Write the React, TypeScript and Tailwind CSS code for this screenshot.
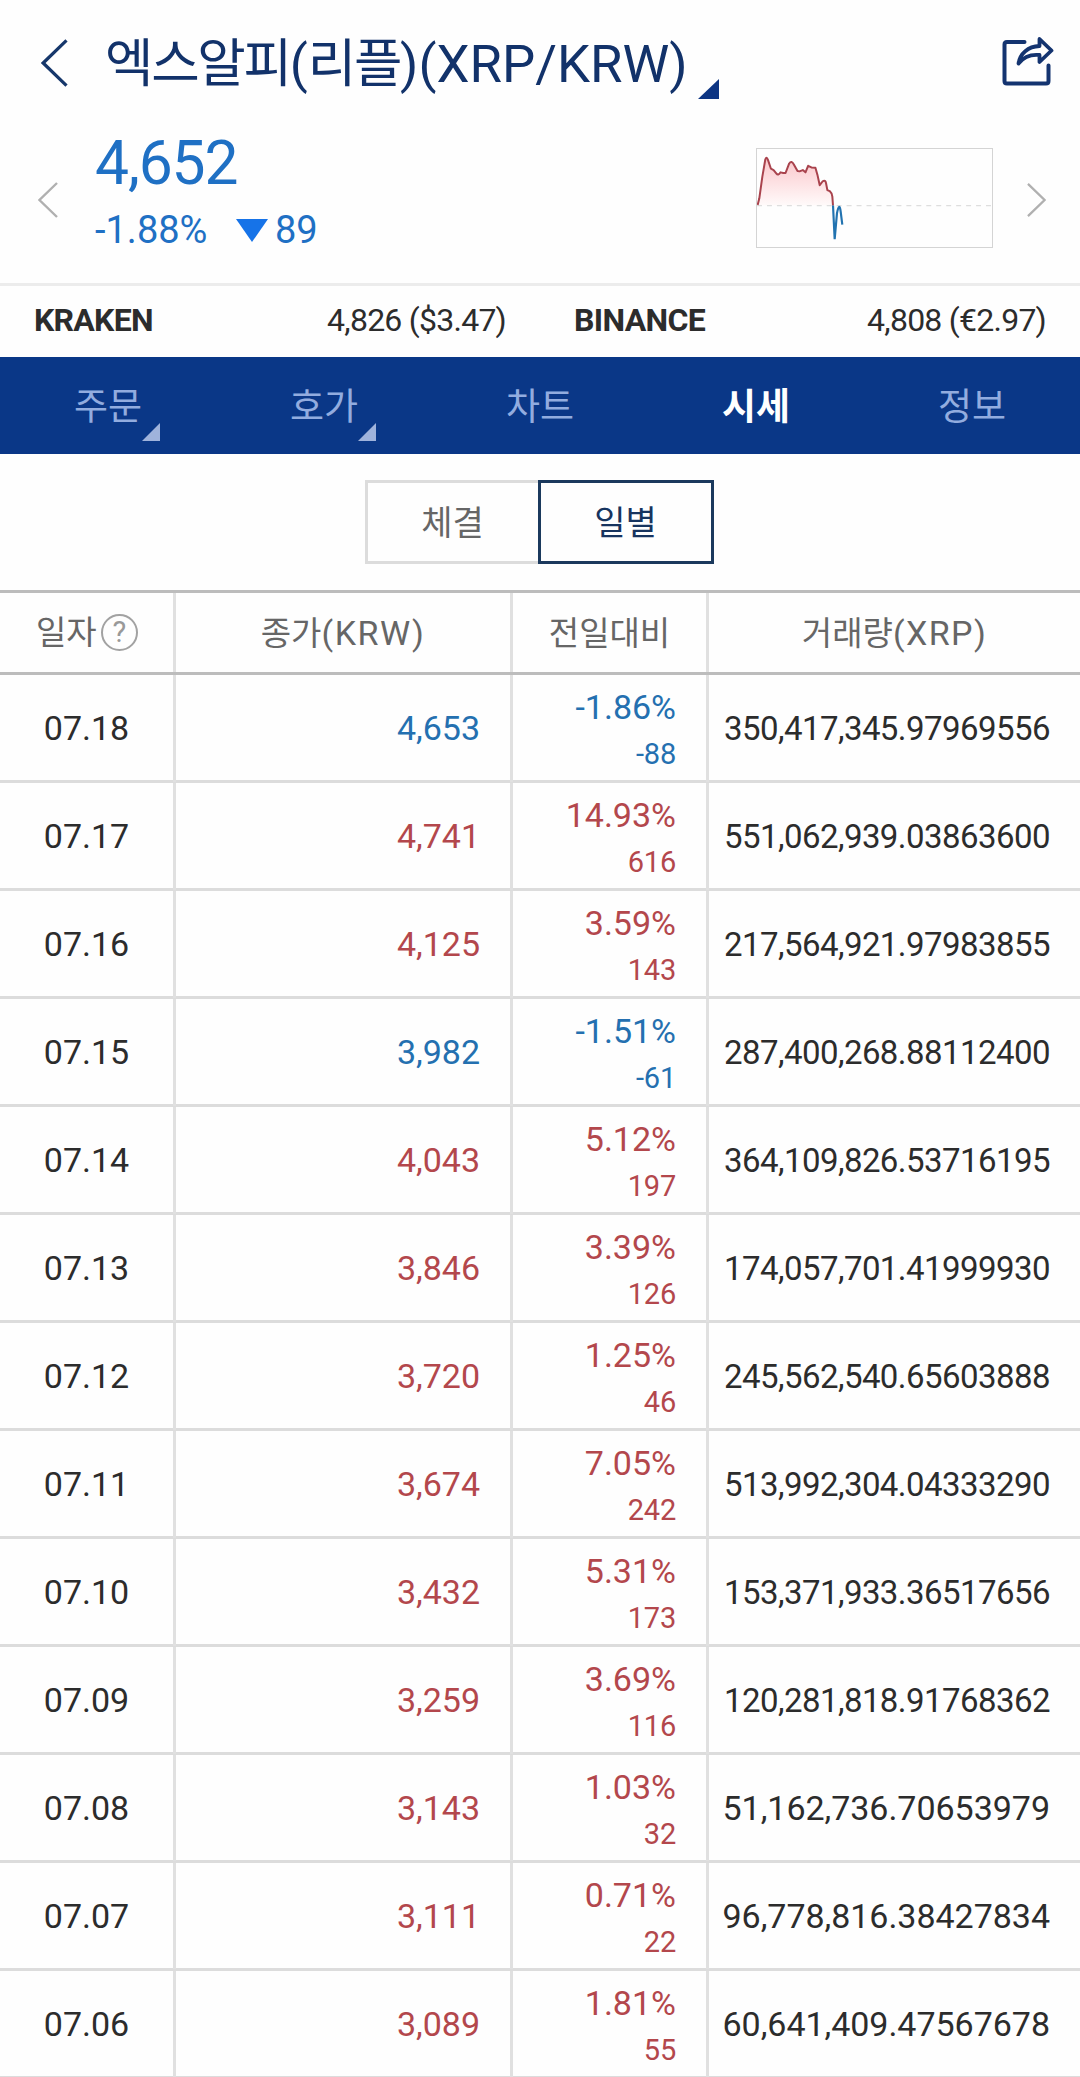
import React from "react";

type Row = { date: string; price: string; pct: string; diff: string; volume: string };

const rows: Row[] = [
  { date: "07.18", price: "4,653", pct: "-1.86%", diff: "-88", volume: "350,417,345.97969556" },
  { date: "07.17", price: "4,741", pct: "14.93%", diff: "616", volume: "551,062,939.03863600" },
  { date: "07.16", price: "4,125", pct: "3.59%", diff: "143", volume: "217,564,921.97983855" },
  { date: "07.15", price: "3,982", pct: "-1.51%", diff: "-61", volume: "287,400,268.88112400" },
  { date: "07.14", price: "4,043", pct: "5.12%", diff: "197", volume: "364,109,826.53716195" },
  { date: "07.13", price: "3,846", pct: "3.39%", diff: "126", volume: "174,057,701.41999930" },
  { date: "07.12", price: "3,720", pct: "1.25%", diff: "46", volume: "245,562,540.65603888" },
  { date: "07.11", price: "3,674", pct: "7.05%", diff: "242", volume: "513,992,304.04333290" },
  { date: "07.10", price: "3,432", pct: "5.31%", diff: "173", volume: "153,371,933.36517656" },
  { date: "07.09", price: "3,259", pct: "3.69%", diff: "116", volume: "120,281,818.91768362" },
  { date: "07.08", price: "3,143", pct: "1.03%", diff: "32", volume: "51,162,736.70653979" },
  { date: "07.07", price: "3,111", pct: "0.71%", diff: "22", volume: "96,778,816.38427834" },
  { date: "07.06", price: "3,089", pct: "1.81%", diff: "55", volume: "60,641,409.47567678" },
];

const tabs = [
  { label: "주문", menu: true },
  { label: "호가", menu: true },
  { label: "차트" },
  { label: "시세", active: true },
  { label: "정보" },
];

function Chevron({ className, flip }: { className: string; flip?: boolean }) {
  return (
    <svg viewBox="0 0 20 36" className={className} fill="none" stroke="currentColor" strokeWidth="2.4">
      <path d={flip ? "M1 1 L18.5 18 L1 35" : "M19 1 L1.5 18 L19 35"} />
    </svg>
  );
}

function Corner({ className }: { className: string }) {
  return (
    <svg viewBox="0 0 10 10" preserveAspectRatio="none" className={className} fill="currentColor">
      <path d="M10 0 V10 H0 Z" />
    </svg>
  );
}

function ShareIcon() {
  return (
    <svg viewBox="0 0 52 50" className="h-[50px] w-[52px] text-[#143470]" fill="none" stroke="currentColor" strokeWidth="4" strokeLinejoin="round" strokeLinecap="round">
      <path d="M22.5 6 H5 Q2.5 6 2.5 8.5 V45 Q2.5 47.5 5 47.5 H44 Q46.5 47.5 46.5 45 V29.5" />
      <path strokeWidth="3.8" d="M37.5 3 L49.5 14.5 L37.5 26 V19 C28 18 22 20.5 16.5 27.5 C18 17.500 26 10.500 37.5 10 Z" />
    </svg>
  );
}

function MiniChart() {
  const line =
    "M52 210 L57 190 L66 125 L75 72 Q78 60 83 73 L92 100 L100 104 L108 114 Q114 123 121 111 L129 113 L136 113 L147 84 Q154 74 161 87 L172 107 L178 108 L188 104 L196 111 L204 91 L214 96 L226 97 L232 118 L239 150 L248 138 Q256 133 258 144 L262 165 L269 168 Q276 174 277 185 L279 212";
  return (
    <svg viewBox="50 40 708 298" className="h-[100px] w-[237px] border border-[#d4d4d4]" preserveAspectRatio="none" fill="none">
      <defs>
        <linearGradient id="rise" x1="0" y1="0" x2="0" y2="1">
          <stop offset="0" stopColor="#fbc6ca" />
          <stop offset="1" stopColor="#fffafa" />
        </linearGradient>
      </defs>
      <path d={line + " L52 212 Z"} fill="url(#rise)" />
      <path d="M50 212 H758" stroke="#dedede" strokeWidth="4" strokeDasharray="15 15" />
      <path d={line} stroke="#a9434d" strokeWidth="6" strokeLinejoin="round" />
      <path d="M279 212 L284 314 L291 235 Q298 200 302 230 L307 270" stroke="#2273b0" strokeWidth="6.5" />
    </svg>
  );
}

export default function App() {
  return (
    <div className="h-[2077px] w-[1080px] overflow-hidden bg-[#fefefe] font-[Roboto,'Noto_Sans_CJK_KR',sans-serif] text-[#2c2c2c]">
      <header className="flex h-[104px] items-start pl-[41px]">
        <Chevron className="mt-[39px] h-[48px] w-[27px] text-[#16376b]" />
        <h1 className="ml-[37px] mt-[32px] whitespace-nowrap text-[52.7px] leading-[64px] text-[#12326a]">
          <span className="tracking-[-2.3px]">엑스알피</span>(<span className="tracking-[-2.3px]">리플</span>)(XRP/KRW)
        </h1>
        <Corner className="ml-auto mr-[283px] mt-[79px] h-[20px] w-[21px] shrink-0 text-[#0d3583]" />
        <div className="mr-[26px] mt-[36px] shrink-0">
          <ShareIcon />
        </div>
      </header>

      <section className="flex h-[179px] items-start pl-[38px]">
        <Chevron className="mt-[78px] h-[36px] w-[20px] text-[#b0b0b0]" />
        <div className="ml-[37px] mt-[24px] text-[#1f70c4]">
          <div className="text-[60.5px] leading-[71px] tracking-[-1.1px]">4,652</div>
          <div className="mt-[7px] flex items-center text-[38px] leading-[48px]">
            <span className="w-[141px]">-1.88%</span>
            <svg viewBox="0 0 32 23" className="h-[23px] w-[32px] text-[#1673e8]" fill="currentColor">
              <path d="M0 0 H32 L16 23 Z" />
            </svg>
            <span className="ml-[7px]">89</span>
          </div>
        </div>
        <div className="ml-auto mt-[44px]">
          <MiniChart />
        </div>
        <Chevron flip className="ml-[34px] mr-[34px] mt-[78px] h-[36px] w-[19px] text-[#b0b0b0]" />
      </section>

      <section className="grid h-[74px] grid-cols-2 border-t-[3px] border-[#ececec] text-[32px] leading-[68px]">
        <div className="flex justify-between px-[34px]">
          <b className="tracking-[-0.75px]">KRAKEN</b>
          <span className="tracking-[-0.75px]">4,826 ($3.47)</span>
        </div>
        <div className="flex justify-between px-[34px]">
          <b className="tracking-[-0.65px]">BINANCE</b>
          <span className="tracking-[-0.75px]">4,808 (€2.97)</span>
        </div>
      </section>

      <nav className="grid h-[97px] grid-cols-5 bg-[#0a3787] text-[37px] leading-[102px] text-[#92acdf]">
        {tabs.map((t) => (
          <div key={t.label} className={t.active ? "relative text-center font-bold text-white" : "relative text-center"}>
            {t.label}
            {t.menu && <Corner className="absolute right-[56px] top-[66px] h-[18px] w-[18px] text-[#9fb3dc]" />}
          </div>
        ))}
      </nav>

      <div className="flex h-[136px] justify-center pr-[2px] pt-[26px] text-[34px] leading-[81px]">
        <div className="h-[84px] w-[173px] border-[3px] border-r-0 border-[#dcdcdc] text-center text-[#666]">체결</div>
        <div className="h-[84px] w-[176px] border-[3px] border-[#1b395d] text-center text-[#17345f]">일별</div>
      </div>

      <div className="grid h-[85px] grid-cols-[176px_337px_196px_371px] grid-rows-[79px] border-y-[3px] border-[#bcbcbc] text-[33px] leading-[81px] text-[#666]">
        <div className="flex items-center border-r-[3px] border-[#e0e0e0] pl-[36px]">
          <span>일자</span>
          <span className="ml-[4px] flex h-[37px] w-[37px] items-center justify-center rounded-full border-2 border-[#a2a2a2] text-[29px] leading-none text-[#999]">?</span>
        </div>
        <div className="border-r-[3px] border-[#e0e0e0] text-center">
          종가<span className="text-[34px] tracking-[1.6px]">(KRW)</span>
        </div>
        <div className="border-r-[3px] border-[#e0e0e0] text-center">전일대비</div>
        <div className="text-center">
          거래량<span className="text-[34px] tracking-[1.4px]">(XRP)</span>
        </div>
      </div>

      {rows.map((r) => {
        const tone = r.pct.startsWith("-") ? "text-[#2470b0]" : "text-[#b3474c]";
        return (
          <div key={r.date} className="grid h-[108px] grid-cols-[176px_337px_196px_371px] border-b-[3px] border-[#dcdcdc] text-[34px] leading-[106px]">
            <div className="border-r-[3px] border-[#e0e0e0] text-center">{r.date}</div>
            <div className={`border-r-[3px] border-[#e0e0e0] pr-[30px] text-right ${tone}`}>{r.price}</div>
            <div className={`border-r-[3px] border-[#e0e0e0] pr-[30px] pt-[11px] text-right ${tone}`}>
              <div className="leading-[42px]">{r.pct}</div>
              <div className="mt-[5px] text-[29px] leading-[42px] tracking-[-0.2px]">{r.diff}</div>
            </div>
            <div className={r.volume.length > 19 ? "pr-[30px] text-right text-[33px] leading-[107px] tracking-[-0.55px]" : "pr-[30px] text-right tracking-[-0.03px]"}>{r.volume}</div>
          </div>
        );
      })}
    </div>
  );
}
